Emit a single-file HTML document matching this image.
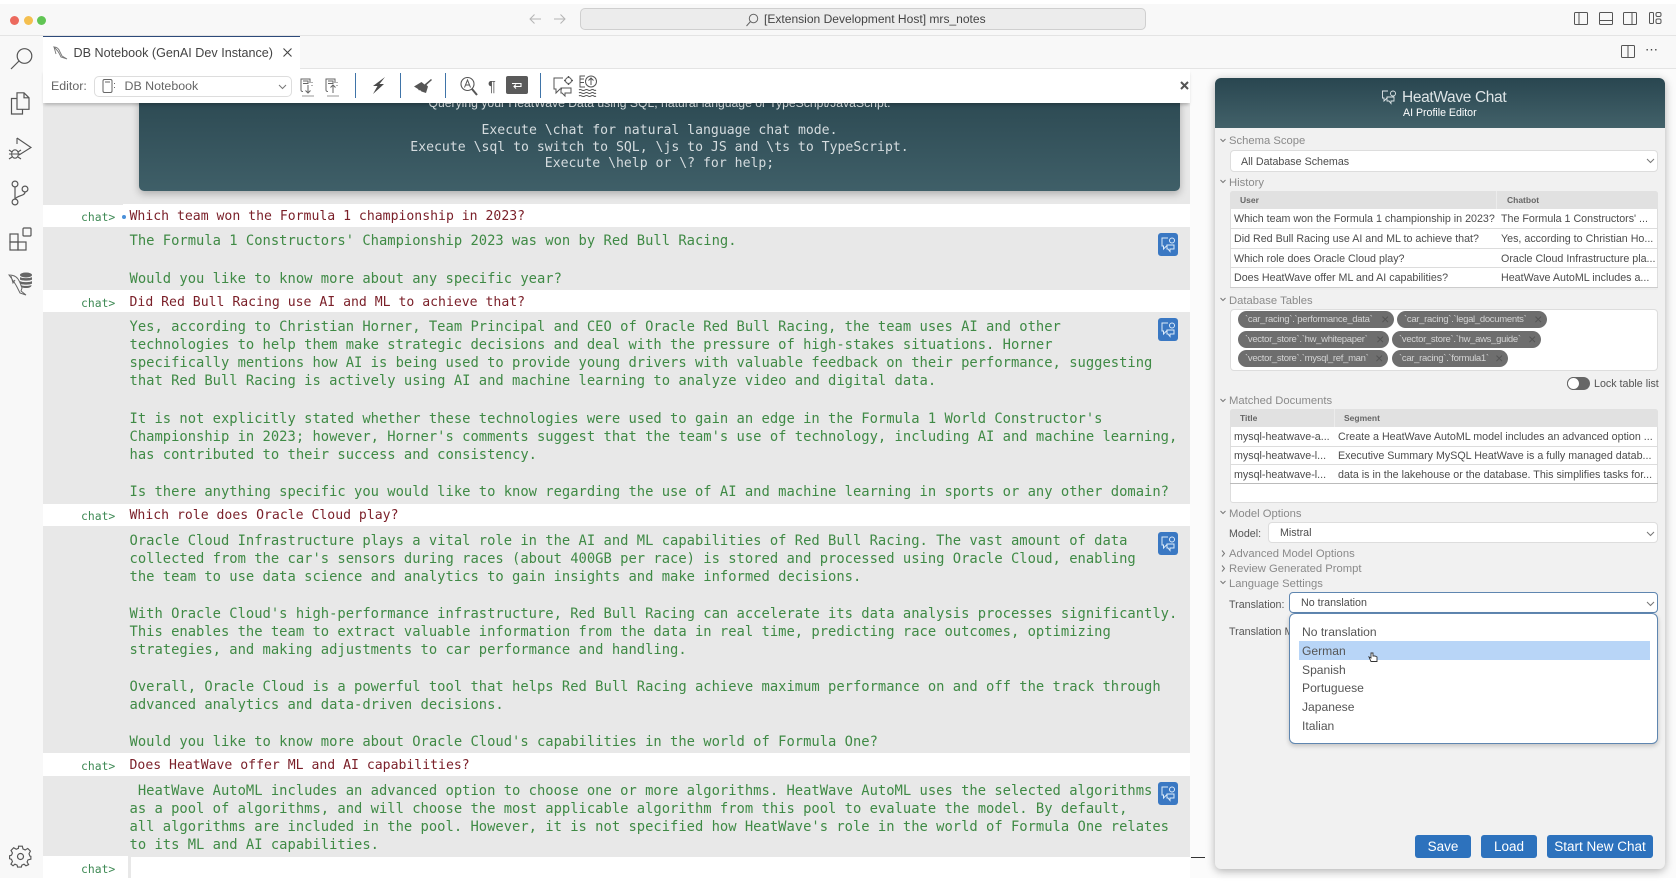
<!DOCTYPE html>
<html><head><meta charset="utf-8"><title>DB Notebook</title>
<style>
*{box-sizing:border-box}
html,body{margin:0;padding:0;width:1676px;height:888px;overflow:hidden;background:#fff;font-family:"Liberation Sans",sans-serif}
.a{position:absolute}
.t{position:absolute;white-space:pre;line-height:18px;transform:translateY(-50%)}
.m{font-family:"DejaVu Sans Mono","Liberation Mono",monospace;font-size:13.82px;color:#3f8a45;left:129.5px;margin-top:.5px}
.q{color:#7a1f28;font-family:"DejaVu Sans Mono","Liberation Mono",monospace;font-size:13.15px;left:129.5px;margin-top:.8px}
.c{font-family:"DejaVu Sans Mono","Liberation Mono",monospace;font-size:11.4px;color:#3f8a55;left:81px}
.w{position:absolute;left:43px;width:1147px;background:#fff}
.bb{position:absolute;left:1158px;width:20px;height:23px;background:#3a78c3;border-radius:3px}
.sec{font-size:11.25px;color:#8a8a8a;left:1229px;margin-top:.6px}
.s{font-size:10.7px;color:#4c4c4c;margin-top:.8px}
.h{font-size:8.5px;font-weight:bold;color:#666}
.sel{position:absolute;background:#fff;border:1px solid #ddd;border-radius:4px}
.chip{position:absolute;background:#6e6e6e;border-radius:9px;height:17px;color:#d4d4d4;font-size:9.5px;letter-spacing:-.3px;line-height:17px;padding-left:7px;white-space:pre}
.chip b{position:absolute;right:5px;top:0;font-weight:normal;color:#555;font-size:14px}
.line{position:absolute;background:#dcdcdc;height:1px}
.btn{position:absolute;top:835px;height:23px;background:#2d72bd;border-radius:3px;color:#fff;font-size:13.5px;line-height:23px;text-align:center}
.it{position:absolute;left:1302px;font-size:12.1px;color:#555;line-height:18px;transform:translateY(-50%)}
.sep{position:absolute;top:73px;width:1.5px;height:25px;background:#3f74a8}
svg{position:absolute;overflow:visible}
</style></head><body>

<!-- title bar -->
<div class="a" style="left:0;top:4px;width:1676px;height:31px;background:#f8f8f8"></div>
<div class="a" style="left:0;top:35px;width:1676px;height:1px;background:#e4e4e4"></div>
<div class="a" style="left:9.5px;top:15.5px;width:9px;height:9px;border-radius:50%;background:#ec6a5e"></div>
<div class="a" style="left:23.5px;top:15.5px;width:9px;height:9px;border-radius:50%;background:#f4bf4f"></div>
<div class="a" style="left:36.5px;top:15.5px;width:9px;height:9px;border-radius:50%;background:#61c554"></div>
<svg style="left:529px;top:13px" width="12" height="12" fill="none" stroke="#b5b5b5" stroke-width="1"><path d="M12 6H1M5.500 1.500 1 6l4.500 4.500"/></svg>
<svg style="left:554px;top:13px" width="12" height="12" fill="none" stroke="#b5b5b5" stroke-width="1"><path d="M0 6h11M6.500 1.500 11 6l-4.500 4.500"/></svg>
<div class="a" style="left:580px;top:8px;width:566px;height:22px;background:#ececec;border:1px solid #cfcfcf;border-radius:5px"></div>
<svg style="left:746px;top:13px" width="13" height="14" fill="none" stroke="#666" stroke-width="1"><circle cx="7.500" cy="5.500" r="4.200"/><path d="M4.500 8.500.5 13"/></svg>
<div class="t" style="left:764px;top:19px;font-size:12.05px;color:#444">[Extension Development Host] mrs_notes</div>
<svg style="left:1574px;top:12px" width="14" height="14" fill="none" stroke="#555" stroke-width="1"><rect x=".5" y=".5" width="13" height="12" rx="1"/><path d="M5 .5v12"/></svg>
<svg style="left:1599px;top:12px" width="14" height="14" fill="none" stroke="#555" stroke-width="1"><rect x=".5" y=".5" width="13" height="12" rx="1"/><path d="M.5 8.500h13"/></svg>
<svg style="left:1623px;top:12px" width="14" height="14" fill="none" stroke="#555" stroke-width="1"><rect x=".5" y=".5" width="13" height="12" rx="1"/><path d="M9 .5v12"/></svg>
<svg style="left:1649px;top:12px" width="13" height="14" fill="none" stroke="#555" stroke-width="1"><rect x=".5" y=".5" width="4" height="11" rx="1"/><rect x="7" y=".5" width="5" height="4" rx="1.500"/><rect x="7" y="7" width="5" height="4.500" rx="1.500"/></svg>

<!-- activity bar -->
<div class="a" style="left:0;top:36px;width:43px;height:842px;background:#f8f8f8"></div>
<svg style="left:10px;top:47px" width="24" height="24" fill="none" stroke="#555" stroke-width="1.200"><circle cx="14.500" cy="9" r="7.300"/><path d="M9 14 1 22"/></svg>
<svg style="left:10px;top:92px" width="20" height="24" fill="none" stroke="#555" stroke-width="1.200"><path d="M7 .8h7l5 5v11.500H7zM14 .8v5h5M7 6.500H1.500v15.500h11v-4.700"/></svg>
<svg style="left:9px;top:137px" width="24" height="24" fill="none" stroke="#555" stroke-width="1.100"><path d="M8 1l14 9.500L10 18M8 1v6"/><ellipse cx="6" cy="17" rx="3.400" ry="4.200"/><path d="M0 13l3 2M0 17h2.500M0 22l3-2M12 13l-3 2M10 17h2M12 22l-3-2M2.500 17h7"/></svg>
<svg style="left:11px;top:180px" width="18" height="26" fill="none" stroke="#555" stroke-width="1.200"><circle cx="4" cy="4" r="2.900"/><circle cx="4" cy="22" r="2.900"/><circle cx="14" cy="9" r="2.900"/><path d="M4 7v12M14 12c0 4-7 3-10 7"/></svg>
<svg style="left:9px;top:227px" width="24" height="24" fill="none" stroke="#555" stroke-width="1.200"><rect x="1" y="7" width="8" height="8"/><rect x="1" y="15" width="8" height="8"/><rect x="9" y="15" width="8" height="8"/><rect x="14" y="1" width="8" height="8" rx="1"/></svg>
<svg style="left:9px;top:272px" width="24" height="24"><path d="M0 3c4 0 7 1 9 4 2 3 3 6 4 9l-1 3 5 4-6-2-3-6C6 11 3 7 0 3zM2 4l2 7 2-3" fill="none" stroke="#666" stroke-width="1"/><ellipse cx="17" cy="3" rx="6" ry="2.500" fill="#666"/><path d="M11 5c1 1.500 11 1.500 12 0v2.500c-1 1.500-11 1.500-12 0zM11 9c1 1.500 11 1.500 12 0v2.500c-1 1.500-11 1.500-12 0zM11.500 13c1 1.200 10 1.200 11 0 0 2-2 3-5.500 3s-5.500-1-5.500-3z" fill="#666"/></svg>
<svg style="left:9px;top:845px" width="23" height="23" fill="none" stroke="#555" stroke-width="1.200"><circle cx="11.500" cy="11.500" r="3"/><path d="M9.500 1h4l.7 3 2.300 1 2.700-1.600 2.800 2.800L20.500 9l1 2.500 1 .2v3l-3 .7-1 2.300 1.600 2.700-2.800 1.300-2-1.700-2.300 1-.5 2h-4l-.5-2-2.300-1-2 1.700L1.500 19.900l1.600-2.700-1-2.300-2-.7v-3l2-.7 1-2.300-1.500-2.700 2.800-2.800 2.700 1.600 2.300-1z" transform="translate(.5 .2) scale(.95)"/></svg>

<!-- tab bar -->
<div class="a" style="left:43px;top:36px;width:1633px;height:32px;background:#f8f8f8"></div>
<div class="a" style="left:43px;top:68px;width:1633px;height:1px;background:#e4e4e4"></div>
<div class="a" style="left:43px;top:36px;width:257px;height:33px;background:#fff;border-top:1.500px solid #2d4a7a"></div>
<svg style="left:53px;top:46px" width="15" height="14" fill="none" stroke="#777" stroke-width=".9"><path d="M1 1c3 0 5 2 6 5l2 4 5 3-6-2-2-4C5 5 3 3 1 1zM1 1l2 7"/></svg>
<div class="t" style="left:73.500px;top:53px;font-size:12.6px;color:#444">DB Notebook (GenAI Dev Instance)</div>
<svg style="left:282px;top:47px" width="11" height="11" fill="none" stroke="#444" stroke-width="1.100"><path d="M1.500 1.500l8 8M9.500 1.500l-8 8"/></svg>
<svg style="left:1621px;top:45px" width="14" height="14" fill="none" stroke="#555" stroke-width="1"><rect x=".5" y=".5" width="13" height="12" rx="1"/><path d="M7 .5v12"/></svg>
<div class="t" style="left:1645px;top:50px;font-size:13px;color:#444;letter-spacing:1.200px">&#8943;</div>

<!-- main content -->
<div class="a" style="left:43px;top:103px;width:1147px;height:775px;background:#e8e8e8"></div>
<div class="a" style="left:1190px;top:69px;width:486px;height:809px;background:#fbfbfb"></div>

<!-- welcome card -->
<div class="a" style="left:139px;top:95px;width:1041px;height:96px;background:linear-gradient(#2c4952,#3f5f68);border-radius:0 0 5px 5px;box-shadow:0 3px 8px rgba(0,0,0,.25)"></div>
<div class="t" style="left:139px;width:1041px;text-align:center;top:103px;font-size:12.2px;color:#dfe5e7">Querying your HeatWave Data using SQL, natural language or TypeScript/JavaScript.</div>
<div class="t m" style="left:139px;width:1041px;text-align:center;top:130.500px;font-size:13.15px;color:#d5dcdf">Execute \chat for natural language chat mode.</div>
<div class="t m" style="left:139px;width:1041px;text-align:center;top:147px;font-size:13.15px;color:#d5dcdf">Execute \sql to switch to SQL, \js to JS and \ts to TypeScript.</div>
<div class="t m" style="left:139px;width:1041px;text-align:center;top:163.500px;font-size:13.15px;color:#d5dcdf">Execute \help or \? for help;</div>

<!-- toolbar -->
<div class="a" style="left:43px;top:69px;width:1147px;height:34px;background:#fff;box-shadow:0 3px 3px -1px rgba(0,0,0,.22)"></div>
<div class="t" style="left:51px;top:86px;font-size:12.4px;color:#666">Editor:</div>
<div class="sel" style="left:94px;top:76px;width:198px;height:21px;border-radius:5px"></div>
<svg style="left:102px;top:78px" width="14" height="17" fill="none" stroke="#666" stroke-width="1"><rect x="1" y="1.500" width="9" height="13" rx="1.500"/><path d="M3 4h5M12.500 5v1M12.500 9v1"/></svg>
<div class="t" style="left:124.500px;top:86px;font-size:12.400px;color:#666">DB Notebook</div>
<svg style="left:278px;top:84px" width="9" height="6" fill="none" stroke="#777"><path d="M1 1l3.500 3.500L8 1"/></svg>
<svg style="left:300px;top:78px" width="16" height="19" fill="none" stroke="#666" stroke-width="1"><path d="M1 12V1h9v4M1 12c0 1 1 1.500 2 1.500M3 3h5v2.500H3M8 7v8M5.500 12.500 8 15l2.500-2.500M12 4v1M12 7v1"/><path d="M2 18h12" stroke="#999"/></svg>
<svg style="left:325px;top:78px" width="16" height="19" fill="none" stroke="#666" stroke-width="1"><path d="M1 12V1h9v4M1 12c0 1 1 1.500 2 1.500M3 3h5v2.500H3M8 15V7M5.500 9.500 8 7l2.500 2.500M12 4v1M12 7v1"/><path d="M2 18h12" stroke="#999"/></svg>
<div class="sep" style="left:354.500px"></div>
<svg style="left:372px;top:77px" width="14" height="18"><path d="M13 0 1 9h4.500L1 17 12 7H7.500z" fill="#4a4a4a"/></svg>
<div class="sep" style="left:399.500px"></div>
<svg style="left:414px;top:79px" width="18" height="15"><path d="M17 0l1 1-5.500 5 1.500 1.500-2 6.500-4.500-1.500-1.500-1.500-1 .5-1-1.500L0 7.500 7.500 3l3 2.500z" fill="#555"/></svg>
<div class="sep" style="left:444.500px"></div>
<svg style="left:460px;top:76px" width="18" height="20" fill="none" stroke="#555" stroke-width="1.100"><circle cx="7.500" cy="8" r="6.500"/><path d="M4.500 11.500 7.500 4l3 7.500M5.500 9h4" stroke-width="1"/><path d="M12 13l5 6" stroke-width="2"/></svg>
<div class="t" style="left:488px;top:86.500px;font-size:14.500px;color:#555">&para;</div>
<div class="a" style="left:506px;top:76px;width:22px;height:18px;background:#5a5a5a;border-radius:2px"></div>
<svg style="left:511px;top:81px" width="12" height="9" fill="none" stroke="#fff" stroke-width="1.100"><path d="M1 2.500h9v3H3M5 3.500 3 5.500l2 2"/></svg>
<div class="sep" style="left:539.500px"></div>
<svg style="left:553px;top:75px" width="21" height="22" fill="none" stroke="#555" stroke-width="1"><path d="M10 3H1v11h2v4l4-4h2M8 13h10v5h-6v3l-3-3H8z"/><circle cx="15.500" cy="5.500" r="3"/><path d="M15.500 1v1M15.500 9v1M11 5.500h1M19 5.500h1" stroke-width="1.500"/></svg>
<svg style="left:579px;top:75px" width="18" height="22" fill="none" stroke="#555" stroke-width="1"><path d="M6 1H1v11h5M1 4h4M1 7.500h4"/><circle cx="12" cy="6.500" r="5.500"/><path d="M12 10V3M9.500 5.500 12 3l2.500 2.500M0 15c2-2 3 2 6 0s3 2 6 0 3 2 5 0M0 18c2-2 3 2 6 0s3 2 6 0 3 2 5 0M0 21c2-2 3 2 6 0s3 2 6 0 3 2 5 0"/></svg>
<svg style="left:1180px;top:81px" width="9" height="9" fill="none" stroke="#555" stroke-width="2"><path d="M1 1l7 7M8 1 1 8"/></svg>

<!-- rows -->
<div class="w" style="top:204px;height:23px"></div>
<div class="a" style="left:43px;top:204px;width:80px;height:1px;background:#e8e8e8"></div>
<div class="t c" style="top:217px">chat&gt;</div>
<div class="a" style="left:121.500px;top:215px;width:4px;height:4px;border-radius:50%;background:#4a90d9"></div>
<div class="t q" style="top:216.500px">Which team won the Formula 1 championship in 2023?</div>
<div class="t m" style="top:240.500px">The Formula 1 Constructors' Championship 2023 was won by Red Bull Racing.</div>
<div class="t m" style="top:278px">Would you like to know more about any specific year?</div>

<div class="w" style="top:290px;height:22px"></div>
<div class="t c" style="top:302.500px">chat&gt;</div>
<div class="t q" style="top:302px">Did Red Bull Racing use AI and ML to achieve that?</div>
<div class="t m" style="top:326.200px">Yes, according to Christian Horner, Team Principal and CEO of Oracle Red Bull Racing, the team uses AI and other</div>
<div class="t m" style="top:344.400px">technologies to help them make strategic decisions and deal with the pressure of high-stakes situations. Horner</div>
<div class="t m" style="top:362.600px">specifically mentions how AI is being used to provide young drivers with valuable feedback on their performance, suggesting</div>
<div class="t m" style="top:380.800px">that Red Bull Racing is actively using AI and machine learning to analyze video and digital data.</div>
<div class="t m" style="top:418.200px">It is not explicitly stated whether these technologies were used to gain an edge in the Formula 1 World Constructor's</div>
<div class="t m" style="top:436.400px">Championship in 2023; however, Horner's comments suggest that the team's use of technology, including AI and machine learning,</div>
<div class="t m" style="top:454.600px">has contributed to their success and consistency.</div>
<div class="t m" style="top:491.500px">Is there anything specific you would like to know regarding the use of AI and machine learning in sports or any other domain?</div>

<div class="w" style="top:504px;height:22px"></div>
<div class="t c" style="top:516px">chat&gt;</div>
<div class="t q" style="top:515px">Which role does Oracle Cloud play?</div>
<div class="t m" style="top:540px">Oracle Cloud Infrastructure plays a vital role in the AI and ML capabilities of Red Bull Racing. The vast amount of data</div>
<div class="t m" style="top:558.200px">collected from the car's sensors during races (about 400GB per race) is stored and processed using Oracle Cloud, enabling</div>
<div class="t m" style="top:576.400px">the team to use data science and analytics to gain insights and make informed decisions.</div>
<div class="t m" style="top:613px">With Oracle Cloud's high-performance infrastructure, Red Bull Racing can accelerate its data analysis processes significantly.</div>
<div class="t m" style="top:631.200px">This enables the team to extract valuable information from the data in real time, predicting race outcomes, optimizing</div>
<div class="t m" style="top:649.400px">strategies, and making adjustments to car performance and handling.</div>
<div class="t m" style="top:686.500px">Overall, Oracle Cloud is a powerful tool that helps Red Bull Racing achieve maximum performance on and off the track through</div>
<div class="t m" style="top:704.800px">advanced analytics and data-driven decisions.</div>
<div class="t m" style="top:741.700px">Would you like to know more about Oracle Cloud's capabilities in the world of Formula One?</div>

<div class="w" style="top:753px;height:23px"></div>
<div class="t c" style="top:766px">chat&gt;</div>
<div class="t q" style="top:765px">Does HeatWave offer ML and AI capabilities?</div>
<div class="t m" style="top:790px"> HeatWave AutoML includes an advanced option to choose one or more algorithms. HeatWave AutoML uses the selected algorithms</div>
<div class="t m" style="top:808.200px">as a pool of algorithms, and will choose the most applicable algorithm from this pool to evaluate the model. By default,</div>
<div class="t m" style="top:826.400px">all algorithms are included in the pool. However, it is not specified how HeatWave's role in the world of Formula One relates</div>
<div class="t m" style="top:844.600px">to its ML and AI capabilities.</div>

<div class="w" style="top:856px;height:22px"></div>
<div class="a" style="left:128px;top:856px;width:3px;height:22px;background:#e8e8e8"></div>
<div class="a" style="left:131px;top:856px;width:1059px;height:1px;background:#e8e8e8"></div>
<div class="t c" style="top:868.500px">chat&gt;</div>
<div class="a" style="left:1191px;top:857px;width:14px;height:1px;background:#333"></div>

<div class="bb" style="top:233px"></div><svg style="left:1161px;top:236px" width="15" height="17" fill="none" stroke="#dcebfa" stroke-width="1"><path d="M7 2H1v8h1.500v3l3-3H6M6 9h7v4h-4v2.500L7 13H6z"/><circle cx="11" cy="4.500" r="2.500"/></svg>
<div class="bb" style="top:318px"></div><svg style="left:1161px;top:321px" width="15" height="17" fill="none" stroke="#dcebfa" stroke-width="1"><path d="M7 2H1v8h1.500v3l3-3H6M6 9h7v4h-4v2.500L7 13H6z"/><circle cx="11" cy="4.500" r="2.500"/></svg>
<div class="bb" style="top:532px"></div><svg style="left:1161px;top:535px" width="15" height="17" fill="none" stroke="#dcebfa" stroke-width="1"><path d="M7 2H1v8h1.500v3l3-3H6M6 9h7v4h-4v2.500L7 13H6z"/><circle cx="11" cy="4.500" r="2.500"/></svg>
<div class="bb" style="top:782px"></div><svg style="left:1161px;top:785px" width="15" height="17" fill="none" stroke="#dcebfa" stroke-width="1"><path d="M7 2H1v8h1.500v3l3-3H6M6 9h7v4h-4v2.500L7 13H6z"/><circle cx="11" cy="4.500" r="2.500"/></svg>

<!-- right panel -->
<div class="a" style="left:1215px;top:78px;width:450px;height:791px;background:#f1f1f1;border-radius:6px;box-shadow:0 2px 9px rgba(0,0,0,.3)"></div>
<div class="a" style="left:1215px;top:78px;width:450px;height:50px;background:linear-gradient(#294650,#426169);border-radius:6px 6px 0 0"></div>
<svg style="left:1382px;top:90px" width="15" height="15" fill="none" stroke="#dfe6e8" stroke-width=".9"><path d="M6 1H.5v7h1.500v3l3-3h.5M5 7h7v4h-3v2.500L7 11H5z"/><circle cx="11" cy="3.500" r="2.500"/></svg>
<div class="t" style="left:1402px;top:97.500px;font-size:15.500px;color:#dde4e6;letter-spacing:-.35px">HeatWave Chat</div>
<div class="t" style="left:1403px;top:112.500px;font-size:10.600px;color:#fff">AI Profile Editor</div>

<svg style="left:1220px;top:138px" width="6" height="5" fill="none" stroke="#777"><path d="M.5 1 3 3.500 5.500 1"/></svg>
<div class="t sec" style="top:140.500px">Schema Scope</div>
<div class="sel" style="left:1230px;top:150px;width:428px;height:22px"></div>
<div class="t s" style="left:1241px;top:161px">All Database Schemas</div>
<svg style="left:1646px;top:158px" width="9" height="6" fill="none" stroke="#777"><path d="M1 1l3.500 3.500L8 1"/></svg>

<svg style="left:1220px;top:179px" width="6" height="5" fill="none" stroke="#777"><path d="M.5 1 3 3.500 5.500 1"/></svg>
<div class="t sec" style="top:182px">History</div>
<div class="a" style="left:1230px;top:191px;width:428px;height:99px;background:#fff;border:1px solid #ddd;border-radius:3px"></div>
<div class="a" style="left:1230px;top:191px;width:428px;height:18px;background:#e1e1e1;border-radius:3px 3px 0 0"></div>
<div class="a" style="left:1496px;top:191px;width:1px;height:18px;background:#ececec"></div>
<div class="t h" style="left:1240px;top:200px">User</div>
<div class="t h" style="left:1507px;top:200px">Chatbot</div>
<div class="t s" style="left:1234px;top:218.700px">Which team won the Formula 1 championship in 2023?</div>
<div class="t s" style="left:1501px;top:218.700px">The Formula 1 Constructors' ...</div>
<div class="line" style="left:1230px;width:428px;top:228px"></div>
<div class="t s" style="left:1234px;top:238px">Did Red Bull Racing use AI and ML to achieve that?</div>
<div class="t s" style="left:1501px;top:238px">Yes, according to Christian Ho...</div>
<div class="line" style="left:1230px;width:428px;top:248px"></div>
<div class="t s" style="left:1234px;top:258px">Which role does Oracle Cloud play?</div>
<div class="t s" style="left:1501px;top:258px">Oracle Cloud Infrastructure pla...</div>
<div class="line" style="left:1230px;width:428px;top:267px"></div>
<div class="t s" style="left:1234px;top:277px">Does HeatWave offer ML and AI capabilities?</div>
<div class="t s" style="left:1501px;top:277px">HeatWave AutoML includes a...</div>
<div class="a" style="left:1230px;top:287px;width:428px;height:3px;background:#eee;border-top:1px solid #ccc;border-radius:0 0 3px 3px"></div>

<svg style="left:1220px;top:297px" width="6" height="5" fill="none" stroke="#777"><path d="M.5 1 3 3.500 5.500 1"/></svg>
<div class="t sec" style="top:300.500px">Database Tables</div>
<div class="a" style="left:1230px;top:309px;width:428px;height:62px;background:#fff;border:1px solid #ddd;border-radius:4px"></div>
<div class="chip" style="left:1238px;top:311px;width:156px">`car_racing`.`performance_data`<b>&#215;</b></div>
<div class="chip" style="left:1397px;top:311px;width:150px">`car_racing`.`legal_documents`<b>&#215;</b></div>
<div class="chip" style="left:1238px;top:331px;width:151px">`vector_store`.`hw_whitepaper`<b>&#215;</b></div>
<div class="chip" style="left:1392px;top:331px;width:149px">`vector_store`.`hw_aws_guide`<b>&#215;</b></div>
<div class="chip" style="left:1238px;top:350px;width:150px">`vector_store`.`mysql_ref_man`<b>&#215;</b></div>
<div class="chip" style="left:1392px;top:350px;width:116px">`car_racing`.`formula1`<b>&#215;</b></div>

<div class="a" style="left:1567px;top:377px;width:23px;height:13px;background:#666;border-radius:7px"></div>
<div class="a" style="left:1567px;top:377px;width:13px;height:13px;background:#fff;border:1px solid #666;border-radius:50%"></div>
<div class="t s" style="left:1594px;top:383.500px;color:#555">Lock table list</div>

<svg style="left:1220px;top:398px" width="6" height="5" fill="none" stroke="#777"><path d="M.5 1 3 3.500 5.500 1"/></svg>
<div class="t sec" style="top:400.500px">Matched Documents</div>
<div class="a" style="left:1230px;top:409px;width:428px;height:94px;background:#fff;border:1px solid #ddd;border-radius:3px"></div>
<div class="a" style="left:1230px;top:409px;width:428px;height:18px;background:#e1e1e1;border-radius:3px 3px 0 0"></div>
<div class="a" style="left:1334px;top:409px;width:1px;height:18px;background:#ececec"></div>
<div class="t h" style="left:1240px;top:418px">Title</div>
<div class="t h" style="left:1344px;top:418px">Segment</div>
<div class="t s" style="left:1234px;top:436.500px">mysql-heatwave-a...</div>
<div class="t s" style="left:1338px;top:436.500px">Create a HeatWave AutoML model includes an advanced option ...</div>
<div class="line" style="left:1230px;width:428px;top:446px"></div>
<div class="t s" style="left:1234px;top:455px">mysql-heatwave-l...</div>
<div class="t s" style="left:1338px;top:455px">Executive Summary MySQL HeatWave is a fully managed datab...</div>
<div class="line" style="left:1230px;width:428px;top:464px"></div>
<div class="t s" style="left:1234px;top:474px">mysql-heatwave-l...</div>
<div class="t s" style="left:1338px;top:474px">data is in the lakehouse or the database. This simplifies tasks for...</div>
<div class="line" style="left:1230px;width:428px;top:483px;background:#bbb"></div>

<svg style="left:1220px;top:510px" width="6" height="5" fill="none" stroke="#777"><path d="M.5 1 3 3.500 5.500 1"/></svg>
<div class="t sec" style="top:513px">Model Options</div>
<div class="t s" style="left:1229px;top:533.500px;color:#555">Model:</div>
<div class="sel" style="left:1268px;top:522px;width:390px;height:21px"></div>
<div class="t s" style="left:1280px;top:532px">Mistral</div>
<svg style="left:1646px;top:531px" width="9" height="6" fill="none" stroke="#777"><path d="M1 1l3.500 3.500L8 1"/></svg>
<svg style="left:1221px;top:550px" width="5" height="7" fill="none" stroke="#777"><path d="M1 .5 3.500 3.500 1 6.500"/></svg>
<div class="t sec" style="top:553px">Advanced Model Options</div>
<svg style="left:1221px;top:565px" width="5" height="7" fill="none" stroke="#777"><path d="M1 .5 3.500 3.500 1 6.500"/></svg>
<div class="t sec" style="top:568px">Review Generated Prompt</div>
<svg style="left:1220px;top:580px" width="6" height="5" fill="none" stroke="#777"><path d="M.5 1 3 3.500 5.500 1"/></svg>
<div class="t sec" style="top:583px">Language Settings</div>
<div class="t s" style="left:1229px;top:604px;color:#555">Translation:</div>
<div class="sel" style="left:1289px;top:592px;width:369px;height:21px;border-color:#5f86b0"></div>
<div class="t s" style="left:1301px;top:602.500px">No translation</div>
<svg style="left:1646px;top:601px" width="9" height="6" fill="none" stroke="#777"><path d="M1 1l3.500 3.500L8 1"/></svg>
<div class="t s" style="left:1229px;top:631px;color:#555">Translation Metadata:</div>

<!-- dropdown -->
<div class="a" style="left:1289px;top:613px;width:369px;height:131px;background:#fff;border:1.500px solid #5f86b0;border-radius:6px;box-shadow:0 2px 5px rgba(0,0,0,.2)"></div>
<div class="a" style="left:1298.500px;top:641px;width:351.500px;height:19px;background:#b8d5f7"></div>
<div class="it" style="top:632px">No translation</div>
<div class="it" style="top:650.500px">German</div>
<div class="it" style="top:669.500px">Spanish</div>
<div class="it" style="top:688px">Portuguese</div>
<div class="it" style="top:707px">Japanese</div>
<div class="it" style="top:726px">Italian</div>
<svg style="left:1368px;top:652px" width="11" height="12"><path d="M3 1v5L1 5l2 4.500h6V5L7 4 5 4V1z" fill="#fff" stroke="#333" stroke-width=".9"/></svg>

<div class="btn" style="left:1415px;width:56px">Save</div>
<div class="btn" style="left:1481px;width:56px">Load</div>
<div class="btn" style="left:1547px;width:106px">Start New Chat</div>

</body></html>
